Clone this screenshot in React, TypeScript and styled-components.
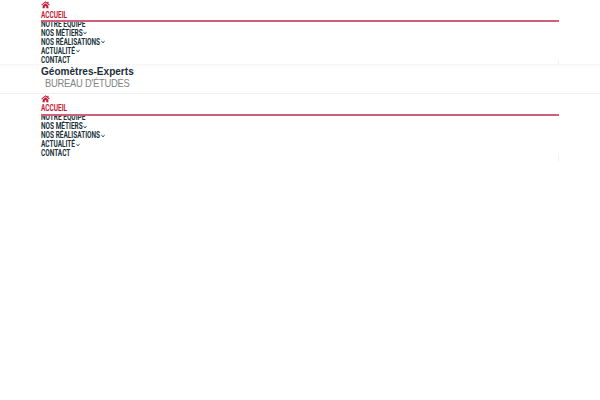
import React from 'react';
import styled, { createGlobalStyle } from 'styled-components';

const GlobalStyle = createGlobalStyle`
    body {
        margin: 0;
        background: #fff;
        overflow: hidden;
    }
`;

const Page = styled.div`
    width: 600px;
    height: 400px;
    background: #fff;
`;

const Header = styled.header`
    height: 64px;
    padding: 0 41px;
`;

const Brand = styled.div`
    box-sizing: border-box;
    height: 30px;
    padding: 1px 41px 0;
    border-top: 1px solid #f6f6f6;
    border-bottom: 1px solid #f0f0f0;
    background: linear-gradient(#fafafa, #fff 5px);
    white-space: nowrap;
`;

const BrandName = styled.div`
    height: 11px;
    font: 700 10px/11px 'Liberation Sans', sans-serif;
    color: #1c2d38;
    transform: scaleX(1.005);
    transform-origin: left;
`;

const BrandTagline = styled.div`
    height: 13px;
    padding-left: 4px;
    font: 400 10.5px/13px 'Liberation Sans', sans-serif;
    letter-spacing: -0.3px;
    color: #7f8386;
    transform: scaleX(0.895);
    transform-origin: 4px 50%;
`;

const Nav = styled.nav<{ $shift: number }>`
    --label-shift: ${({ $shift }) => $shift}px;
    display: flex;
    flex-direction: column;
    box-sizing: border-box;
    height: 68px;
    background: linear-gradient(#f3f3f3, #f3f3f3) right bottom / 1px 8px no-repeat;
`;

const HomeItem = styled.a`
    display: flex;
    height: 10px;
    padding: 1px 0 0;
    box-sizing: border-box;
`;

const Item = styled.a<{ $active?: boolean }>`
    position: relative;
    z-index: ${({ $active }) => ($active ? 1 : 0)};
    display: flex;
    align-items: center;
    flex: none;
    box-sizing: border-box;
    height: ${({ $active }) => ($active ? '12px' : '9px')};
    margin-bottom: ${({ $active }) => ($active ? '-3px' : '0')};
    padding-bottom: ${({ $active }) => ($active ? '1px' : '0')};
    border-bottom: ${({ $active }) => ($active ? '2px solid #d0607a' : 'none')};
    background: ${({ $active }) => ($active ? '#fff' : 'transparent')};
    color: ${({ $active }) => ($active ? '#c61b36' : '#20323a')};
    font: 700 8px/9px Roboto, sans-serif;
    white-space: nowrap;
`;

const Label = styled.span<{ $width: number }>`
    width: ${({ $width }) => $width}px;
    height: 9px;

    span {
        display: block;
        width: max-content;
        transform: translateY(var(--label-shift)) scale(0.81, 1.06);
        transform-origin: left;
    }
`;

const HomeIcon = () => (
    <svg width="9" height="8" viewBox="0 0 18 16" fill="#c61b36">
        <path d="M9 0.5 0.5 7.7 1.8 9.2 9 3.2l7.2 6 1.3-1.5L15 5.5V1.5h-2.4v2z" />
        <path d="M9 4.7 3.2 9.5v5h4.3v-4h3v4h4.3v-5z" />
    </svg>
);

const Chevron = () => (
    <svg width="4" height="4" viewBox="0 0 4 4" fill="none" stroke="#20323a" strokeWidth="1">
        <path d="M0.4 1.2 2 2.7 3.6 1.2" />
    </svg>
);

const ITEMS = [
    { label: 'ACCUEIL', width: 26, active: true },
    { label: 'NOTRE ÉQUIPE', width: 44 },
    { label: 'NOS MÉTIERS', width: 42, submenu: true },
    { label: 'NOS RÉALISATIONS', width: 60, submenu: true },
    { label: 'ACTUALITÉ', width: 35, submenu: true },
    { label: 'CONTACT', width: 30 },
];

const Menu: React.FC<{ shift?: number }> = ({ shift = 0.4 }) => (
    <Nav $shift={shift}>
        <HomeItem>
            <HomeIcon />
        </HomeItem>
        {ITEMS.map(({ label, width, active, submenu }) => (
            <Item key={label} $active={active}>
                <Label $width={width}>
                    <span>{label}</span>
                </Label>
                {submenu && <Chevron />}
            </Item>
        ))}
    </Nav>
);

const App: React.FC = () => (
    <Page>
        <GlobalStyle />
        <Header>
            <Menu />
        </Header>
        <Brand>
            <BrandName>Géomètres-Experts</BrandName>
            <BrandTagline>BUREAU D'ÉTUDES</BrandTagline>
        </Brand>
        <Header>
            <Menu shift={-0.4} />
        </Header>
    </Page>
);

export default App;
